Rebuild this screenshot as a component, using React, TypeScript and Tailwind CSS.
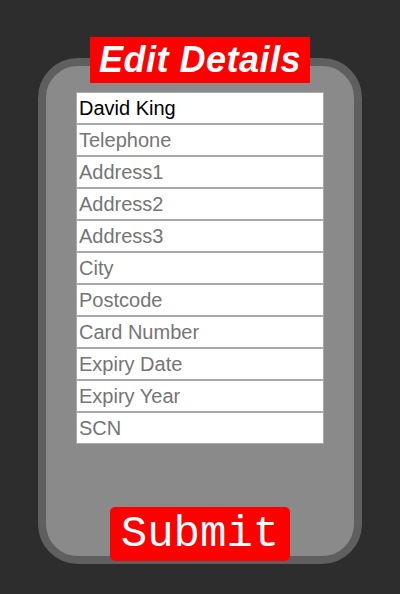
import React from 'react'

const fields = ['Telephone', 'Address1', 'Address2', 'Address3', 'City', 'Postcode', 'Card Number', 'Expiry Date', 'Expiry Year', 'SCN']

export default function App() {
  return (
    <div className="w-[400px] h-[594px] bg-[#2d2d2d] flex flex-col items-center pt-[37px] font-['Liberation_Sans',Arial,sans-serif]">
      <h1 className="relative z-10 w-[220px] h-[46px] bg-[#ff0000] text-white text-[36px] font-bold italic flex items-center justify-center leading-none tracking-[0.5px]">
        Edit Details
      </h1>
      <div className="-mt-[25px] w-[324px] h-[506px] rounded-[40px] border-[8px] border-[#5f5f5f] bg-[#8a8a8a] flex flex-col items-center pt-[26px]">
        <form className="flex flex-col w-[248px]" onSubmit={e => e.preventDefault()}>
          <input
            defaultValue="David King"
            className="h-[32px] w-full bg-white border border-[#a9a9a9] px-[2px] text-[20px] text-black outline-none"
          />
          {fields.map(f => (
            <input
              key={f}
              placeholder={f}
              className="h-[32px] w-full bg-white border border-[#a9a9a9] px-[2px] text-[20px] text-black placeholder:text-[#757575] outline-none"
            />
          ))}
        </form>
        <button className="mt-auto -mb-[5px] w-[180px] h-[54px] rounded-[5px] bg-[#ff0000] text-white text-[44px] leading-none font-['Liberation_Mono','Courier_New',monospace]">
          Submit
        </button>
      </div>
    </div>
  )
}
